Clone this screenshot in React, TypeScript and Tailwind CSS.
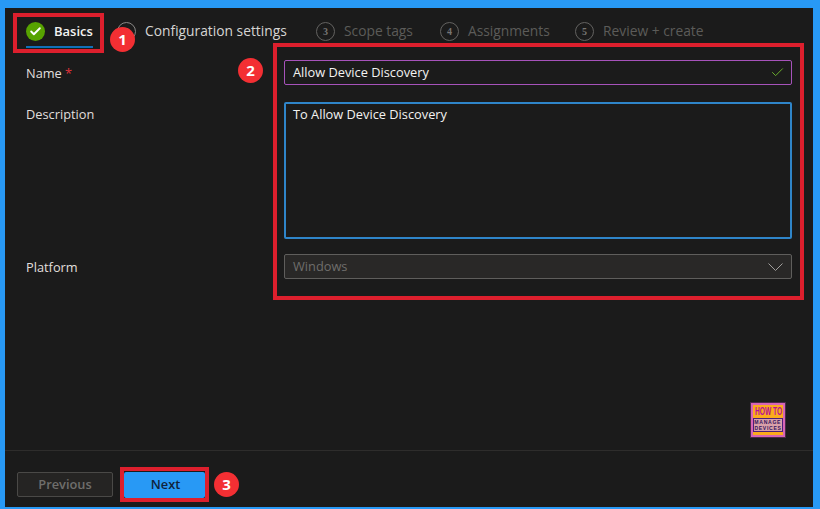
import { Check } from "lucide-react";

const FONT = "font-['Open_Sans','Noto_Sans',sans-serif]";

function Step({ n, label, width }: { n: string; label: string; width: string }) {
  return (
    <div className={`flex items-center ${width}`}>
      <span className="w-[19px] h-[19px] rounded-full border-[1.5px] border-[#636260] flex items-center justify-center text-[10px] font-bold text-[#767573] shrink-0 font-['Liberation_Serif',serif]">
        {n}
      </span>
      <span className="ml-[9px] text-[13.8px] text-[#5c5b59] whitespace-nowrap">{label}</span>
    </div>
  );
}

function Badge({ n, className }: { n: string; className: string }) {
  return (
    <span
      className={`absolute w-[25px] h-[25px] rounded-full bg-[#f32f33] text-white text-[15px] font-bold flex items-center justify-center ${className}`}
    >
      {n}
    </span>
  );
}

function Logo() {
  return (
    <div className="absolute left-[745px] top-[394px] w-[36px] h-[36px] bg-[#d765b5] border border-[#4a2a48] p-[2px] flex flex-col font-['Liberation_Sans',sans-serif]">
      <div className="bg-[#fbab1c] flex-1 flex flex-col items-center overflow-hidden">
        <span className="text-[11px] leading-[13px] font-bold text-[#b5109a] scale-x-[0.6] whitespace-nowrap">
          HOW TO
        </span>
        <div className="w-full h-[14px] bg-[#d9a0a8] border border-[#4a1f7a] flex flex-col items-center justify-center text-[#33155f] overflow-hidden">
          <span className="text-[6px] leading-[6px] font-bold tracking-[0.8px] scale-x-[0.85] whitespace-nowrap">MANAGE</span>
          <span className="text-[6px] leading-[6px] font-bold tracking-[0.8px] scale-x-[0.85] whitespace-nowrap">DEVICES</span>
        </div>
      </div>
    </div>
  );
}

export default function App() {
  return (
    <div className={`w-[820px] h-[509px] bg-[#2899f5] pt-[8px] pl-[5px] pr-[7px] pb-[2px] ${FONT}`}>
      <div className="relative h-full bg-[#1b1b1b] flex flex-col">
        {/* tabs */}
        <div className="flex pl-[21px] pt-[14px] h-[40px]">
          <div className="w-[91px] shrink-0">
            <div className="w-[67px] flex flex-col">
              <div className="flex items-center h-[19px]">
                <span className="w-[19px] h-[19px] rounded-full bg-[#57a300] flex items-center justify-center shrink-0">
                  <Check size={13} strokeWidth={3.5} className="text-white" />
                </span>
                <span className="ml-[9px] text-[13px] font-semibold text-[#f3f2f1]">Basics</span>
              </div>
              <div className="mt-[5px] h-[2px] bg-[#1070b8]" />
            </div>
          </div>
          <div className="flex h-[19px]">
            <div className="flex items-center w-[199px]">
              <span className="w-[19px] h-[19px] rounded-full border-[1.5px] border-[#8a8886] flex items-center justify-center text-[10px] font-bold text-[#999] shrink-0 font-['Liberation_Serif',serif]">
                2
              </span>
              <span className="ml-[9px] text-[13.8px] text-[#d6d5d3] whitespace-nowrap">Configuration settings</span>
            </div>
            <Step n="3" label="Scope tags" width="w-[124px]" />
            <Step n="4" label="Assignments" width="w-[135px]" />
            <Step n="5" label="Review + create" width="w-[130px]" />
          </div>
        </div>

        {/* form */}
        <div className="flex-1 pl-[21px] pr-[21px] pt-[12px] text-[12.8px] text-[#e1dfdd]">
          <div className="flex items-center h-[25px]">
            <label className="w-[258px] shrink-0 pt-[2px]">
              Name <span className="text-[#e0323a]">*</span>
            </label>
            <div className="flex-1 h-[25px] rounded-[2px] border border-[#a652ba] px-[6px] pl-[8px] flex items-center justify-between text-[#f3f2f1]">
              <span className="pt-[1px]">Allow Device Discovery</span>
              <Check size={15} strokeWidth={1.5} className="text-[#6fb52e]" />
            </div>
          </div>

          <div className="flex mt-[17px]">
            <label className="w-[258px] shrink-0 pt-[3px]">Description</label>
            <div className="flex-1 h-[137px] rounded-[2px] border-2 border-[#2f85c9] px-[7px] pt-[1px] text-[#f3f2f1]">
              To Allow Device Discovery
            </div>
          </div>

          <div className="flex items-center mt-[15px] h-[25px]">
            <label className="w-[258px] shrink-0 pt-[2px]">Platform</label>
            <div className="flex-1 h-[25px] rounded-[2px] border border-[#5f5e5c] bg-[#292827] pl-[8px] pr-[8px] flex items-center justify-between text-[#6f6e6c]">
              <span className="pt-[1px]">Windows</span>
              <svg width="15" height="8" viewBox="0 0 15 8" fill="none" className="text-[#a19f9d]">
                <path d="M0.5 0.5 L7.5 7.5 L14.5 0.5" stroke="currentColor" strokeWidth="1" />
              </svg>
            </div>
          </div>
        </div>

        {/* footer */}
        <div className="h-[57px] border-t border-[#2e2d2c] pl-[12px] pt-[21px] flex items-start text-[12.8px] font-semibold">
          <button className="w-[96px] h-[25px] rounded-[2px] border border-[#4a4947] bg-[#252423] text-[#6f6e6c]">
            Previous
          </button>
          <button className="ml-[11px] w-[81px] h-[26px] rounded-[2px] bg-[#2899f5] text-[#10233a] pl-[2px]">Next</button>
        </div>

        {/* annotations */}
        <div className="absolute left-[8px] top-[5px] w-[91px] h-[40px] border-[4px] border-[#dd1f2d]" />
        <div className="absolute left-[268px] top-[35px] w-[531px] h-[257px] border-[4px] border-[#dd1f2d]" />
        <div className="absolute left-[115px] top-[459px] w-[89px] h-[35px] border-[4px] border-[#dd1f2d]" />
        <Badge n="1" className="left-[105px] top-[19px]" />
        <Badge n="2" className="left-[233px] top-[50px]" />
        <Badge n="3" className="left-[209px] top-[464px]" />
        <Logo />
      </div>
    </div>
  );
}
